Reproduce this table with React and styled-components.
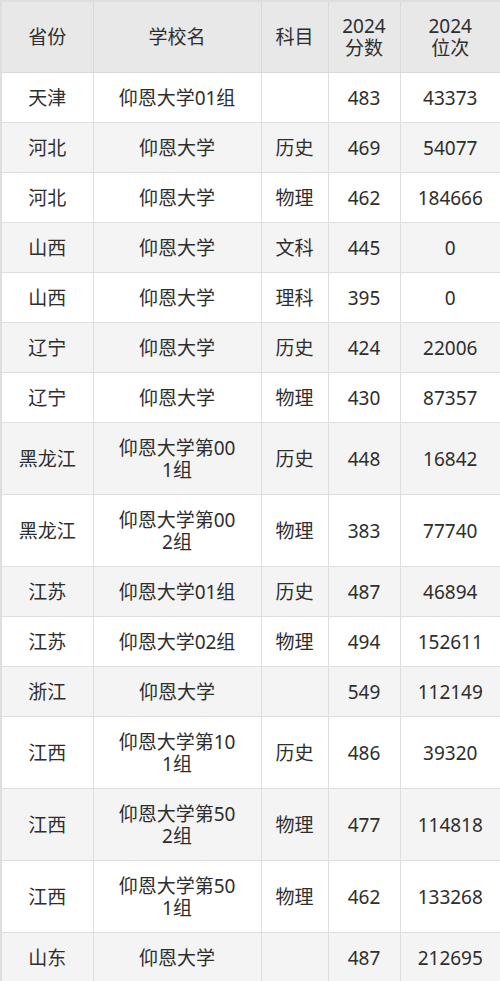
import React from "react";
import styled, { createGlobalStyle } from "styled-components";

const Global = createGlobalStyle`
  html, body { margin: 0; padding: 0; background: #fff; }
  body { font-family: "Noto Sans", "Noto Sans CJK SC", sans-serif; }
`;

const Table = styled.table`
  width: 500px;
  border-collapse: collapse;
  table-layout: fixed;
  color: #2e2e2e;
  font-family: "Noto Sans", "Noto Sans CJK SC", sans-serif;
  font-size: 19px;
  line-height: 22px;
  border: 2px solid #dedede;
`;

const Th = styled.th`
  background: #e8e8e8;
  font-weight: 400;
  border: 1px solid #dadada;
  height: 70px;
  padding: 0 2px;
  text-align: center;
  white-space: pre-line;
  color: #2e2e2e;
`;

const Row = styled.tr`
  background: ${(p) => (p.$alt ? "#f4f4f4" : "#ffffff")};
`;

const Td = styled.td`
  border: 1px solid #dedede;
  height: ${(p) => (p.$tall ? 71 : 49)}px;
  padding: 0 2px;
  text-align: center;
  white-space: pre-line;
`;

const cols = [92, 168, 67, 72, 101];

const rows = [
  ["天津", "仰恩大学01组", "", "483", "43373"],
  ["河北", "仰恩大学", "历史", "469", "54077"],
  ["河北", "仰恩大学", "物理", "462", "184666"],
  ["山西", "仰恩大学", "文科", "445", "0"],
  ["山西", "仰恩大学", "理科", "395", "0"],
  ["辽宁", "仰恩大学", "历史", "424", "22006"],
  ["辽宁", "仰恩大学", "物理", "430", "87357"],
  ["黑龙江", "仰恩大学第00\n1组", "历史", "448", "16842"],
  ["黑龙江", "仰恩大学第00\n2组", "物理", "383", "77740"],
  ["江苏", "仰恩大学01组", "历史", "487", "46894"],
  ["江苏", "仰恩大学02组", "物理", "494", "152611"],
  ["浙江", "仰恩大学", "", "549", "112149"],
  ["江西", "仰恩大学第10\n1组", "历史", "486", "39320"],
  ["江西", "仰恩大学第50\n2组", "物理", "477", "114818"],
  ["江西", "仰恩大学第50\n1组", "物理", "462", "133268"],
  ["山东", "仰恩大学", "", "487", "212695"],
];

export default function App() {
  return (
    <>
      <Global />
      <Table>
        <colgroup>
          {cols.map((w, i) => (
            <col key={i} style={{ width: w }} />
          ))}
        </colgroup>
        <thead>
          <tr>
            <Th>省份</Th>
            <Th>学校名</Th>
            <Th>科目</Th>
            <Th>{"2024\n分数"}</Th>
            <Th>{"2024\n位次"}</Th>
          </tr>
        </thead>
        <tbody>
          {rows.map((r, i) => {
            const tall = r[1].includes("\n");
            return (
              <Row key={i} $alt={i % 2 === 1}>
                {r.map((c, j) => (
                  <Td key={j} $tall={tall}>
                    {c}
                  </Td>
                ))}
              </Row>
            );
          })}
        </tbody>
      </Table>
    </>
  );
}
